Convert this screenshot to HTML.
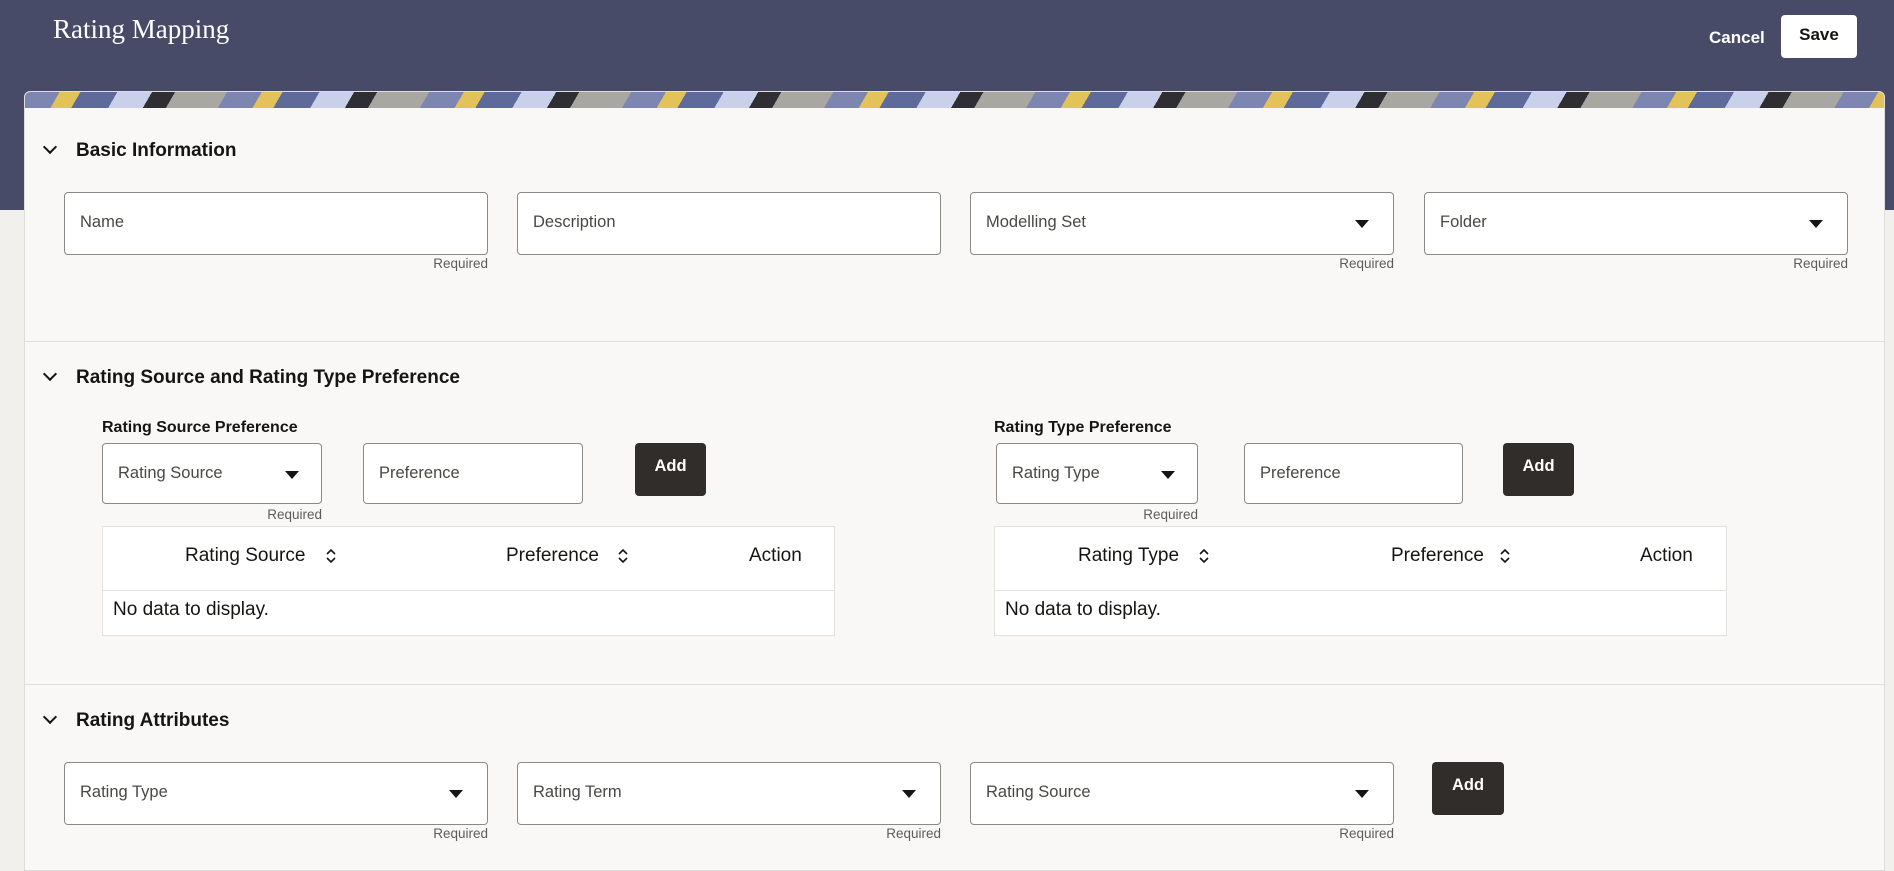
<!DOCTYPE html>
<html><head><meta charset="utf-8"><style>
*{box-sizing:border-box;margin:0;padding:0}
body{width:1894px;height:853px;overflow:hidden;background:#f2f0ed;font-family:"Liberation Sans",sans-serif;position:relative;color:#161513}
.hdr{position:absolute;left:0;top:0;width:1894px;height:210px;background:#474b68}
.title{position:absolute;left:53px;top:14px;font-family:"Liberation Serif",serif;font-size:27px;color:#fff}
.cancel{position:absolute;left:1709px;top:28px;color:#fff;font-weight:bold;font-size:17px}
.save{position:absolute;left:1781px;top:15px;width:76px;height:43px;background:#fff;border-radius:4px;font-weight:bold;font-size:17px;text-align:center;line-height:40px}
.card{position:absolute;left:24px;top:91px;width:1861px;height:780px;background:#f9f8f6;border-radius:6px 6px 0 0;overflow:hidden;border:1px solid #ddd}
.banner{position:absolute;left:0;top:0;width:100%;height:16px;background:repeating-linear-gradient(120deg,#7c86b0 0 30px,#e3c25a 30px 48px,#5e6b9a 48px 80px,#c9d0ea 80px 110px,#2f2f33 110px 130px,#a9a7a2 130px 175px)}
.abs{position:absolute}
.sec{position:absolute;font-weight:bold;font-size:19px}
.chev{position:absolute;width:10px;height:10px;border-right:2.5px solid #161513;border-bottom:2.5px solid #161513;transform:rotate(45deg)}
.inp{position:absolute;background:#fff;border:1px solid #8b8985;border-radius:4px;height:63px}
.inp span{position:absolute;left:15px;top:20px;font-size:16.5px;color:#4a4845}
.tri{position:absolute;top:27px;width:0;height:0;border-left:7px solid transparent;border-right:7px solid transparent;border-top:8px solid #161513}
.req{position:absolute;font-size:13.5px;color:#5e5c58;text-align:right}
.btn{position:absolute;background:#312d2a;color:#fff;font-weight:bold;font-size:16.5px;border-radius:4px;text-align:center;line-height:46px;height:53px}
.lbl{position:absolute;font-weight:bold;font-size:16px}
.tbl{position:absolute;background:#fff;border:1px solid #e4e2df;height:110px}
.tbl .hr{position:absolute;left:0;right:0;top:63px;border-top:1px solid #e4e2df}
.th{position:absolute;top:18px;font-size:19px}
.nd{position:absolute;left:10px;top:72px;font-size:19px}
.div{position:absolute;left:0;width:100%;border-top:1px solid #e0deda}
.srt{position:absolute}
</style></head><body>
<div class="hdr"></div>
<div class="title">Rating Mapping</div>
<div class="cancel">Cancel</div>
<div class="save">Save</div>
<div class="card">
<div class="banner"></div>
<div class="chev" style="left:20px;top:50px"></div>
<div class="sec" style="left:51px;top:48px">Basic Information</div>
<div class="inp" style="left:39px;top:100px;width:424px"><span>Name</span></div>
<div class="req" style="left:363px;top:164px;width:100px">Required</div>
<div class="inp" style="left:492px;top:100px;width:424px"><span>Description</span></div>
<div class="inp" style="left:945px;top:100px;width:424px"><span>Modelling Set</span><i class="tri" style="right:24px"></i></div>
<div class="req" style="left:1269px;top:164px;width:100px">Required</div>
<div class="inp" style="left:1399px;top:100px;width:424px"><span>Folder</span><i class="tri" style="right:24px"></i></div>
<div class="req" style="left:1723px;top:164px;width:100px">Required</div>
<div class="div" style="top:249px"></div>
<div class="chev" style="left:20px;top:277px"></div>
<div class="sec" style="left:51px;top:275px">Rating Source and Rating Type Preference</div>
<div class="lbl" style="left:77px;top:327px">Rating Source Preference</div>
<div class="inp" style="left:77px;top:351px;width:220px;height:61px"><span>Rating Source</span><i class="tri" style="right:22px"></i></div>
<div class="req" style="left:197px;top:415px;width:100px">Required</div>
<div class="inp" style="left:338px;top:351px;width:220px;height:61px"><span>Preference</span></div>
<div class="btn" style="left:610px;top:351px;width:71px">Add</div>
<div class="tbl" style="left:77px;top:434px;width:733px"><div class="hr"></div>
<div class="th" style="left:82px">Rating Source</div>
<div class="th" style="left:403px">Preference</div>
<div class="th" style="left:646px">Action</div>
<div class="nd">No data to display.</div></div>
<svg class="srt" style="left:300px;top:456px" width="12" height="16"><path d="M2 6 L6 2 L10 6 M2 10 L6 14 L10 10" fill="none" stroke="#161513" stroke-width="1.6"/></svg>
<svg class="srt" style="left:592px;top:456px" width="12" height="16"><path d="M2 6 L6 2 L10 6 M2 10 L6 14 L10 10" fill="none" stroke="#161513" stroke-width="1.6"/></svg>
<div class="lbl" style="left:969px;top:327px">Rating Type Preference</div>
<div class="inp" style="left:971px;top:351px;width:202px;height:61px"><span>Rating Type</span><i class="tri" style="right:22px"></i></div>
<div class="req" style="left:1073px;top:415px;width:100px">Required</div>
<div class="inp" style="left:1219px;top:351px;width:219px;height:61px"><span>Preference</span></div>
<div class="btn" style="left:1478px;top:351px;width:71px">Add</div>
<div class="tbl" style="left:969px;top:434px;width:733px"><div class="hr"></div>
<div class="th" style="left:83px">Rating Type</div>
<div class="th" style="left:396px">Preference</div>
<div class="th" style="left:645px">Action</div>
<div class="nd">No data to display.</div></div>
<svg class="srt" style="left:1173px;top:456px" width="12" height="16"><path d="M2 6 L6 2 L10 6 M2 10 L6 14 L10 10" fill="none" stroke="#161513" stroke-width="1.6"/></svg>
<svg class="srt" style="left:1474px;top:456px" width="12" height="16"><path d="M2 6 L6 2 L10 6 M2 10 L6 14 L10 10" fill="none" stroke="#161513" stroke-width="1.6"/></svg>
<div class="div" style="top:592px"></div>
<div class="chev" style="left:20px;top:620px"></div>
<div class="sec" style="left:51px;top:618px">Rating Attributes</div>
<div class="inp" style="left:39px;top:670px;width:424px"><span>Rating Type</span><i class="tri" style="right:24px"></i></div>
<div class="req" style="left:363px;top:734px;width:100px">Required</div>
<div class="inp" style="left:492px;top:670px;width:424px"><span>Rating Term</span><i class="tri" style="right:24px"></i></div>
<div class="req" style="left:816px;top:734px;width:100px">Required</div>
<div class="inp" style="left:945px;top:670px;width:424px"><span>Rating Source</span><i class="tri" style="right:24px"></i></div>
<div class="req" style="left:1269px;top:734px;width:100px">Required</div>
<div class="btn" style="left:1407px;top:670px;width:72px">Add</div>
</div>
</body></html>
